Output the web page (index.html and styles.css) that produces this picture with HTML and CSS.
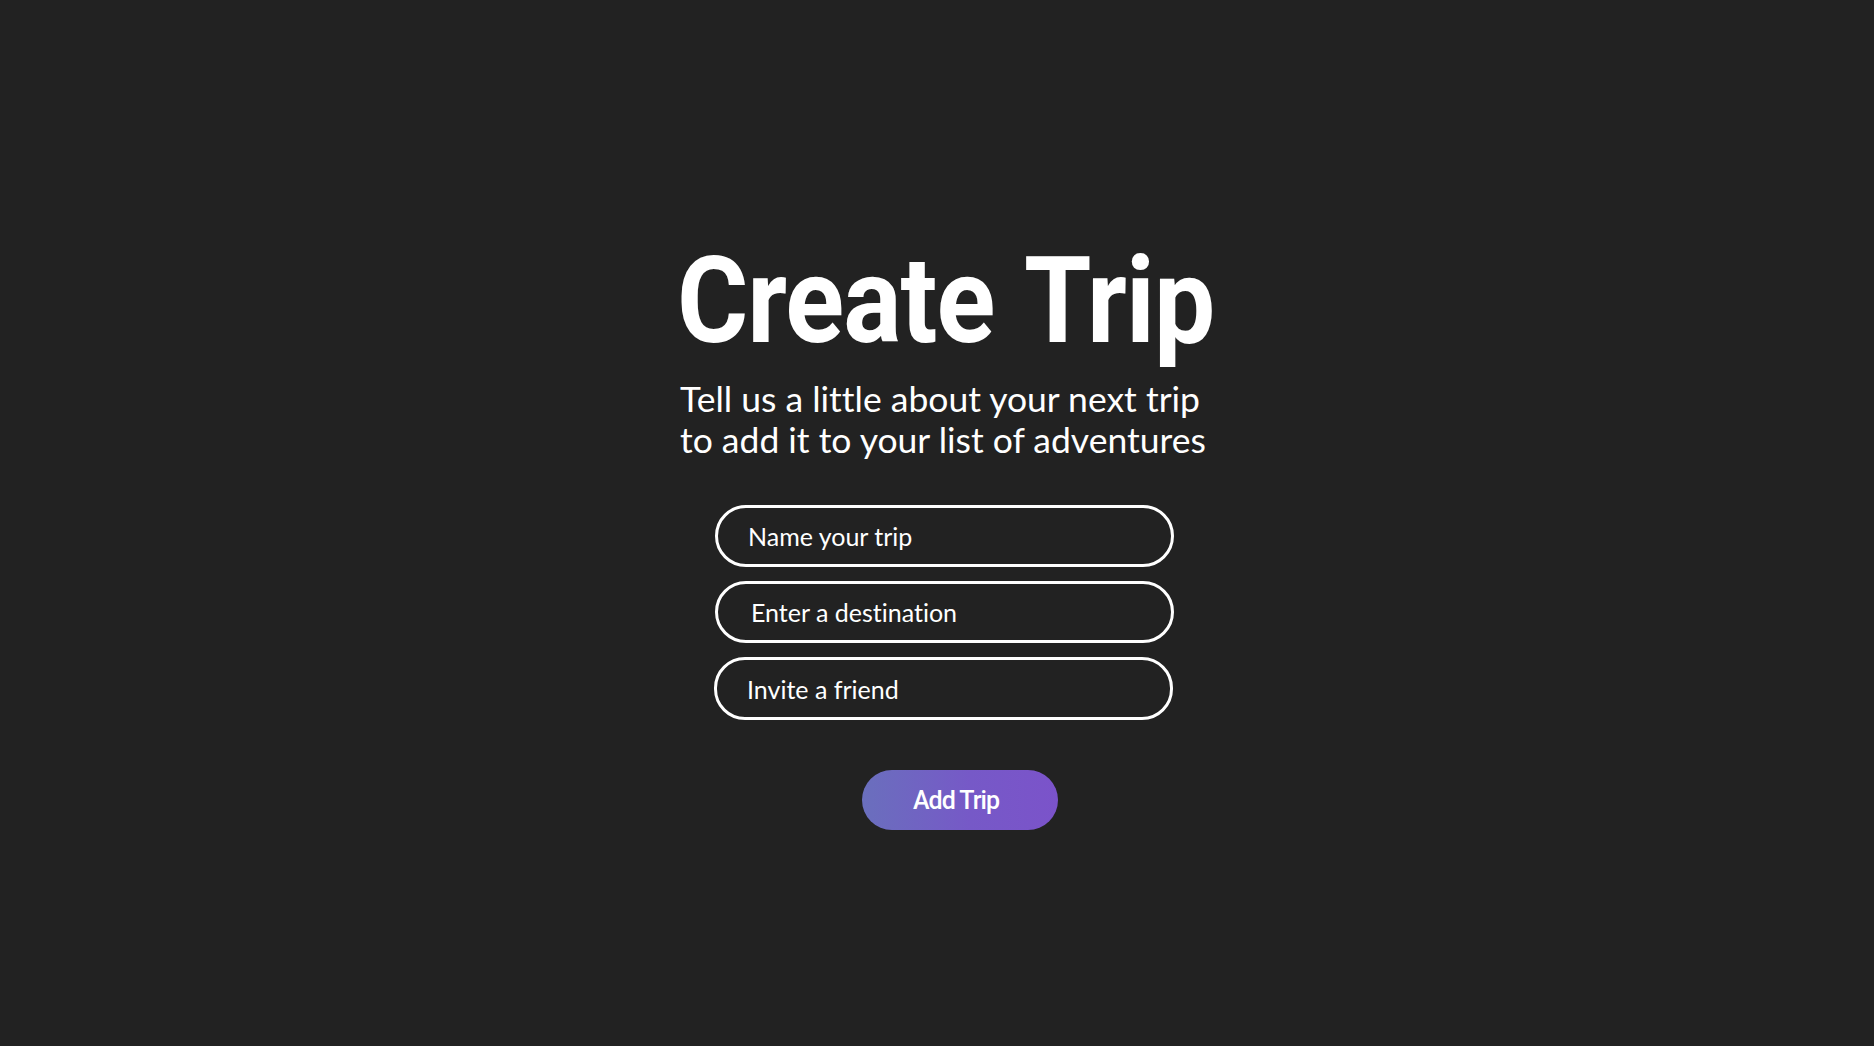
FILE: index.html
```html
<!DOCTYPE html>
<html lang="en">
<head>
<meta charset="utf-8">
<title>Create Trip</title>
<link rel="stylesheet" href="styles.css">
</head>
<body>
<main class="page">
  <section class="card">
    <h1 class="title">Create Trip</h1>
    <p class="subtitle">Tell us a little about your next trip<br>to add it to your list of adventures</p>
    <form class="form">
      <input class="field field-name" type="text" placeholder="Name your trip">
      <input class="field field-dest" type="text" placeholder="Enter a destination">
      <input class="field field-friend" type="text" placeholder="Invite a friend">
      <button class="add-btn" type="button">Add Trip</button>
    </form>
  </section>
</main>
</body>
</html>
```
FILE: styles.css
```css
html, body {
  margin: 0;
  padding: 0;
  background: #222222;
}
.page {
  width: 1874px;
  height: 1046px;
  box-sizing: border-box;
  padding-top: 241px;
  padding-left: 672px;
  font-variant-ligatures: none;
}
.card {
  width: 580px;
  display: flex;
  flex-direction: column;
  align-items: flex-start;
}
.title {
  margin: 0 0 0 5px;
  font-family: "Roboto", sans-serif;
  font-weight: 700;
  font-size: 121px;
  line-height: 120px;
  letter-spacing: -1px;
  word-spacing: 7px;
  white-space: nowrap;
  color: #ffffff;
  transform: scaleX(0.9);
  transform-origin: left center;
}
.subtitle {
  margin: 17px 0 0 8px;
  font-family: "Lato", "Open Sans", sans-serif;
  font-weight: 400;
  font-size: 35.5px;
  line-height: 41px;
  white-space: nowrap;
  color: #ffffff;
  font-variant-ligatures: none;
}
.form {
  margin: 45px 0 0 43px;
  display: flex;
  flex-direction: column;
  align-items: flex-start;
  gap: 14px;
}
.field {
  box-sizing: border-box;
  width: 459px;
  height: 62px;
  border: 3px solid #ffffff;
  border-radius: 31px;
  background: transparent;
  padding: 0 0 0 30px;
  font-family: "Lato", "Open Sans", sans-serif;
  font-size: 25px;
  font-variant-ligatures: none;
  color: #ffffff;
  outline: none;
}
.field::placeholder {
  color: #ffffff;
  opacity: 1;
}
.field-dest {
  padding-left: 33px;
}
.field-friend {
  margin-left: -1px;
  height: 63px;
}
.add-btn {
  margin: 36px 0 0 147px;
  width: 196px;
  height: 60px;
  border: none;
  border-radius: 30px;
  background: linear-gradient(90deg, #6a6fbd 0%, #7659c7 55%, #7b53ca 100%);
  color: #ffffff;
  font-family: "Roboto", sans-serif;
  font-weight: 500;
  font-size: 25px;
  letter-spacing: -1px;
  padding: 0 8px 0 0;
  cursor: pointer;
}
```
